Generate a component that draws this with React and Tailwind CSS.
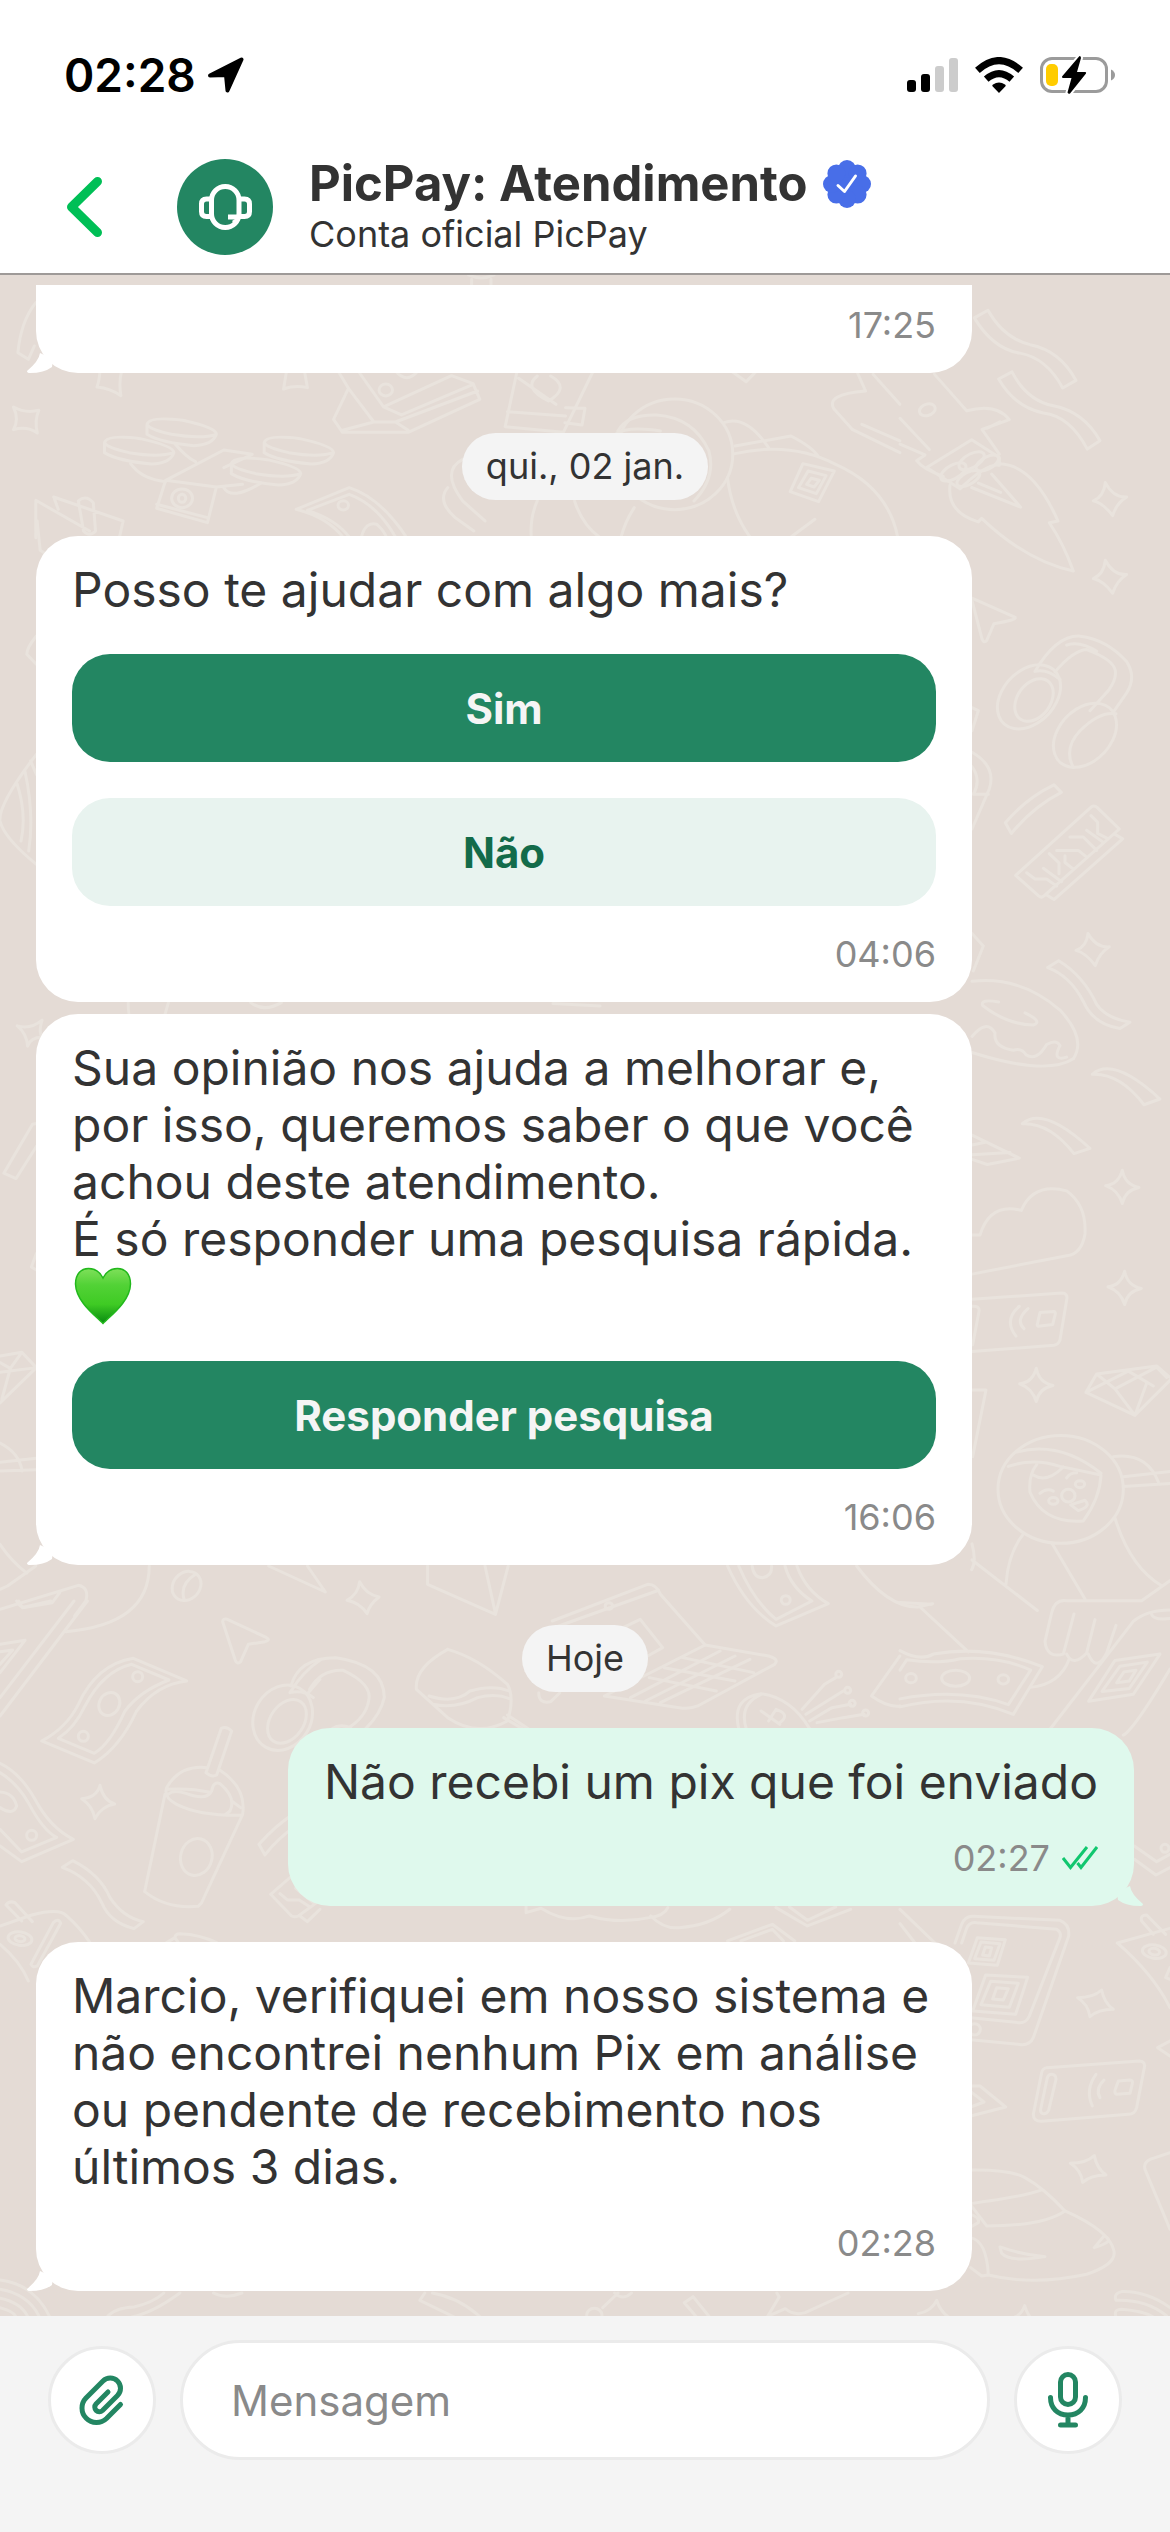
import { useState } from 'react';

const messages = [
    { id: 1, type: 'bubble', time: '17:25', tail: true, cut: true },
    { id: 2, type: 'date', text: 'qui., 02 jan.' },
    {
        id: 3,
        type: 'bubble',
        text: 'Posso te ajudar com algo mais?',
        actions: [{ label: 'Sim', primary: true }, { label: 'Não' }],
        time: '04:06',
    },
    {
        id: 4,
        type: 'bubble',
        joined: true,
        text: 'Sua opinião nos ajuda a melhorar e, por isso, queremos saber o que você achou deste atendimento.\nÉ só responder uma pesquisa rápida.',
        heart: true,
        actions: [{ label: 'Responder pesquisa', primary: true }],
        time: '16:06',
        tail: true,
    },
    { id: 5, type: 'date', text: 'Hoje' },
    { id: 6, type: 'bubble', mine: true, text: 'Não recebi um pix que foi enviado', time: '02:27', tail: true },
    {
        id: 7,
        type: 'bubble',
        text: 'Marcio, verifiquei em nosso sistema e não encontrei nenhum Pix em análise ou pendente de recebimento nos últimos 3 dias.',
        time: '02:28',
        tail: true,
    },
];

// Wallpaper line art, grouped by area. Ovals are [cx, cy, rx, ry, rotation].
const doodles = [
    {
        transform: 'translate(0 270) scale(.7462 .3333)',
        lines: [
            'M48 95Q28 150 24 245L38 265L46 225M628 12Q645 30 662 12M632 25V45M658 25V45',
            'M18 408Q34 428 52 418Q46 448 50 486Q36 464 18 476Q26 446 18 408Z',
            'M134 300Q133 330 130 348Q148 352 162 374Q159 335 163 300M384 300L380 354Q395 342 412 350L408 300',
            'M453 300L467 352L447 445L459 484H547L643 385L634 338L605 314L514 408L480 300M467 352L501 453L459 478M501 453H530L547 478M514 408L538 432L634 340M530 453L640 360M530 300Q545 340 560 300',
            'M693 300L677 467L755 484L795 300M680 422L758 435M758 410L784 412L780 462L757 455M695 322L745 400M720 315Q700 350 735 390Q765 350 738 315',
            'M175 578Q190 625 222 632M235 520Q250 560 262 572M222 628L300 537L338 550L300 590M222 628L290 648L278 755L210 712ZM210 700L278 740M290 648L325 640M300 650Q310 690 350 636',
            'M48 800V688L120 780M72 678L165 750L160 800M72 678L78 715M105 690Q115 670 125 695L128 780Q120 800 112 780Z',
            'M397 715L468 650Q510 680 545 800M397 715Q440 740 460 800M412 718L468 670Q505 700 530 798M412 718Q450 745 468 798M484 800Q490 750 505 760Q515 780 518 800',
            'M828 480Q840 430 880 432Q930 440 950 540Q960 620 930 690M825 490Q840 465 885 480M970 455Q1000 430 1030 530M985 525L1060 495Q1090 530 1097 558M985 548Q1060 510 1120 580Q1190 650 1203 798M975 620Q980 720 1005 798',
            'M1076 578L1118 600L1097 692L1059 662ZM1083 600L1107 614L1094 668L1070 650ZM1087 622L1098 628L1091 648L1081 640ZM1092 745L1060 798M712 800Q710 740 720 690M832 800Q838 750 850 710M770 690Q780 760 803 798M620 565Q590 600 620 690L650 750M600 650Q585 690 610 740L635 780',
            'M980 300L1000 332L1014 300',
            'M197 460Q200 435 245 448Q290 470 290 490Q270 505 230 490Q200 475 197 460V490Q215 515 260 524Q285 522 290 490',
            'M140 515Q143 490 188 503Q233 525 233 545Q213 560 173 545Q143 530 140 515V545Q158 570 203 579Q228 577 233 545',
            'M354 515Q357 490 402 503Q447 525 447 545Q427 560 387 545Q357 530 354 515V545Q372 570 417 579Q442 577 447 545',
            'M310 578Q313 553 358 566Q403 588 403 608Q383 623 343 608Q313 593 310 578V608Q328 633 373 642Q398 640 403 608',
            'M1148 300L1160 360Q1105 370 1118 415L1142 475L1206 545M1155 460L1206 510M1170 310L1206 400',
        ],
        ovals: [[517, 357, 9, 18], [244, 682, 14, 28], [244, 682, 5, 12], [460, 703, 7, 14], [904, 550, 78, 166]],
    },
    {
        transform: 'translate(900 270) scale(.3333 .4464)',
        lines: [
            'M223 105L264 88Q310 150 390 165Q480 178 528 245L488 262Q440 195 360 184Q280 175 223 105Z',
            'M296 242L336 226Q380 290 460 302Q550 315 600 380L562 399Q510 325 430 318Q345 305 296 242Z',
            'M103 231L200 313Q290 295 328 333L246 355L298 410M300 338L262 352M215 378L298 418L298 435Q260 430 180 488L80 440ZM0 330L88 400M0 388L75 412L50 425Q70 445 130 460',
            'M300 432Q400 435 474 560L448 564Q490 610 520 672Q380 650 245 554L235 562Q140 540 150 480M275 455L362 529L215 485M235 475L302 496',
            'M616 474Q640 508 680 506Q650 520 638 548Q610 520 580 515Q612 505 616 474Z',
            'M616 648Q640 682 680 680Q650 694 638 722Q610 694 580 689Q612 679 616 648Z',
            'M564 1484Q588 1516 628 1514Q598 1528 586 1556Q558 1528 528 1522Q560 1514 564 1484Z',
            'M216 733L346 776Q350 782 282 790L260 828Q252 835 246 824L216 738',
            'M520 1112Q490 1070 540 1030Q600 985 648 992M405 897Q470 815 540 818Q620 825 680 875Q710 910 680 945L640 988M465 898Q520 850 560 848Q640 870 646 895Q650 915 625 940L570 985M405 897Q440 890 480 915M500 838Q540 828 590 852',
            'M316 1236Q380 1180 462 1151L484 1168Q400 1200 334 1260Z',
            'M347 1354L575 1200Q583 1196 592 1202L658 1250L432 1400Q424 1405 416 1400ZM645 1262L668 1272L462 1408L440 1398M380 1348L405 1362H440L470 1378M430 1338L485 1368M448 1305L477 1326V1350M470 1298H535L562 1314M510 1268H550L590 1298M560 1253L610 1280M573 1220L593 1235V1260L625 1272M495 1310V1325L520 1340',
            'M216 978L235 985L216 1030M216 1078Q290 1110 268 1160L216 1250M216 1110Q245 1140 220 1172H265M216 1484L250 1512L220 1568',
        ],
        ovals: [
            [82, 311, 24, 13, -10], [160, 450, 40, 16, -20], [215, 425, 40, 16, -20], [205, 465, 36, 14, -20], [262, 430, 36, 14, -20],
            [387, 954, 100, 64, -25], [402, 961, 62, 42, -30], [555, 1040, 100, 64, -25],
        ],
    },
    {
        transform: 'translate(900 900) scale(.3333 .574)',
        lines: [
            'M667 469Q675 494 717 499Q675 504 667 527Q655 504 617 496Q655 494 667 469Z',
            'M674 645Q682 670 724 675Q682 680 674 703Q662 680 624 672Q662 670 674 645Z',
            'M409 814Q417 839 459 844Q417 849 409 872Q397 849 359 841Q397 839 409 814Z',
            'M443 116L476 104Q550 130 590 180Q620 205 690 211L660 222Q580 215 550 175Q510 130 443 116Z',
            'M216 140Q360 130 480 190Q560 240 520 275Q440 305 216 264M216 236Q260 205 285 230Q280 255 340 260Q365 255 378 268Q410 280 440 250Q470 240 480 252Q455 280 500 272M296 176Q240 170 248 182Q320 215 400 216Q430 210 375 195',
            'M577 302Q640 270 780 345L732 355Q660 300 577 302ZM367 388Q430 356 570 431L522 440Q450 386 367 388Z',
            'M216 408L358 448L262 459L216 450M216 442L330 438M216 425L260 420',
            'M216 582H240Q270 525 364 539Q400 490 500 505Q560 530 555 580Q545 615 500 618L216 650',
            'M216 694L485 683Q505 683 500 695L480 765Q475 773 462 774L216 785M216 706Q240 705 237 715L218 773M420 717L462 715Q468 716 465 722L458 738L415 741Q410 740 413 735ZM358 706Q310 730 348 758M384 710Q345 730 372 745',
            'M216 852H258L218 968M558 856L590 824L770 810L810 830M558 856L705 896L810 835M558 856L685 819L760 845M590 824L645 850L705 896L740 840M645 850L770 812L800 830',
            'M325 985Q400 970 480 985L603 1000Q600 1040 550 1080Q430 1085 390 1030Q385 1000 410 982M350 960Q480 940 603 997M420 1032Q440 1022 460 1028M500 1005Q510 996 530 996M512 1052L555 1044Q575 1055 535 1062ZM400 1000Q440 1015 490 986',
            'M370 1103Q325 1135 318 1190M455 1118L555 1216M645 1075Q690 1160 785 1193M216 1148L412 1236M216 1120Q230 1150 215 1165M640 968Q740 960 775 1012M670 1003L810 994M670 1020L810 1015',
            'M810 1184L725 1219H500Q465 1216 455 1240L435 1290Q440 1320 490 1312L522 1242M500 1312Q520 1335 560 1310L585 1252M565 1312Q590 1345 620 1310L648 1262M508 1320Q480 1365 390 1370',
            'M450 1443L700 1255Q740 1235 810 1235M670 1453Q700 1445 810 1338M755 1243Q760 1253 810 1250M566 1394L645 1323L780 1312L700 1382ZM606 1377L660 1333L742 1326L688 1372ZM650 1362L672 1343L708 1340L688 1359Z',
            'M0 1306Q60 1325 100 1312Q260 1295 427 1334L340 1417Q180 1378 0 1404M0 1340L20 1322Q110 1330 180 1320Q300 1315 392 1340L325 1400Q180 1370 0 1390M60 1230L205 1308M0 1222L95 1225',
        ],
        ovals: [[482, 1025, 188, 94], [460, 1045, 14, 6], [540, 1016, 14, 6], [505, 1036, 20, 11], [167, 1354, 42, 14], [33, 1354, 16, 8], [310, 1356, 16, 8]],
    },
    {
        transform: 'translate(0 1540) scale(.7462 .3333)',
        lines: [
            'M200 75Q200 250 88 272M262 100Q240 130 247 178M0 145L10 135L48 75M0 205L105 133Q120 140 115 180L100 225M25 180L30 200L70 185L80 155',
            'M360 75L436 153L412 75M482 122Q490 160 508 168Q495 190 492 218Q482 185 465 178Q480 160 482 122ZM573 75V130L664 220L681 75M650 75L664 218',
            'M390 435Q400 350 450 350Q515 370 515 470Q510 520 490 563M415 445Q430 385 460 388Q500 430 494 480Q490 530 465 563M445 563Q455 548 470 560',
            'M600 325Q555 380 558 445L600 530Q640 590 680 540Q690 470 680 430Q640 350 600 325M575 465Q610 490 630 450Q660 430 682 450M580 490Q610 505 640 470Q665 455 685 475M675 530L700 563M680 522L708 563',
            'M740 240L868 130Q880 130 885 160L945 312L810 465M745 258L880 150M945 312L1030 345Q1045 355 1038 370L935 495Q925 505 910 500L810 465M965 330L845 470M985 345L865 480M1005 355L885 485M915 350L1010 395M890 380L985 420M870 410L960 450M835 260L858 235L888 320L868 345M722 455Q722 490 738 482L750 456',
            'M975 75Q1000 200 1040 255L1110 188Q1080 150 1068 75M990 75Q1010 180 1040 235L1088 180Q1060 140 1052 75M1008 75Q1010 110 1022 110Q1035 105 1034 75M1148 75Q1190 200 1230 198L1250 188',
            'M990 563Q980 470 1020 458Q1060 470 1085 563M1000 563Q990 490 1020 460M1020 510L1045 550M1030 540L1040 505Q1060 520 1045 545M1075 505L1105 430L1120 410M1080 520L1130 450M1085 540L1115 500L1140 490M1095 545L1130 530L1158 520',
            'M1206 345L1168 465Q1190 500 1206 495',
            'M705 1090V1115L725 1102Q760 1150 790 1125Q830 1150 870 1130Q890 1125 895 1100M872 1125Q890 1165 910 1160Q950 1155 978 1105M1040 1100L1082 1155L1140 1105M1058 1098L1082 1138L1120 1098M975 1200L1035 1150L1065 1200M993 1200L1035 1165L1050 1200',
        ],
        ovals: [[250, 135, 19, 44, 5], [816, 195, 5, 10], [1053, 177, 6, 13], [1124, 400, 4, 9], [1136, 448, 4, 9], [1142, 487, 4, 9], [1160, 516, 4, 9]],
    },
    {
        transform: 'translate(0 1600) scale(.3333)',
        lines: [
            'M50 0Q60 20 75 18L152 0M222 0L0 290M262 0L0 345M0 130L75 118L0 215M0 152L38 147L0 190',
            'M668 62Q668 52 682 55L800 110Q812 118 795 122L745 130L722 182Q712 192 706 178Z',
            'M125 420Q200 380 235 310Q290 190 400 172L560 240Q470 250 410 330Q360 440 283 486ZM175 412Q225 380 255 315Q310 210 395 190L507 237Q420 270 375 330Q330 430 283 457Z',
            'M0 487Q60 515 105 595Q150 680 220 715L65 782L0 735M0 515Q50 545 85 605Q130 690 170 709L65 753L0 685M0 573Q40 575 50 615Q40 645 0 620',
            'M300 553Q310 598 344 609Q305 615 285 653Q278 615 245 593Q290 590 300 553Z',
            'M495 580L434 872Q500 925 595 916L605 905L728 640Q740 560 660 508M622 500Q540 490 500 560Q490 590 530 610Q600 645 725 643M500 565Q570 560 630 574M505 580Q520 565 560 578Q620 600 635 570Q640 540 660 548Q710 590 690 630L675 642M695 600L722 620M664 382L618 515Q635 530 650 522L695 390Q680 375 664 382Z',
            'M870 275Q910 210 960 178M925 275L960 235M870 275Q910 265 940 290M887 635Q830 670 777 730L795 762Q830 715 887 675M887 815L812 880L875 945Q885 950 895 945L950 905M900 945L922 962L960 925M840 878L862 897H898L930 918M887 862L940 905',
            'M187 799L218 779Q300 820 330 890Q370 950 430 962L402 983Q330 965 305 905Q270 830 187 799Z',
            'M0 975L95 942Q180 920 200 945Q240 980 270 1025M0 1030Q60 1080 85 1140M18 912Q28 898 45 905L97 962M18 912L65 960M160 965Q175 950 182 967L112 1095Q98 1102 93 1090ZM500 1025L525 1010Q525 998 540 998Q600 1000 650 1025M525 1010L535 1025',
        ],
        ovals: [[413, 227, 15, 15], [250, 406, 15, 15], [328, 309, 30, 36, 30], [95, 703, 15, 15], [589, 768, 47, 56, 15], [848, 350, 85, 102, 30], [861, 361, 50, 72, 35], [60, 1013, 36, 20, 8], [60, 1013, 15, 9, 8]],
    },
    {
        transform: 'translate(900 1840) scale(.3333)',
        lines: [
            'M165 306L185 250Q195 225 220 226L480 238Q510 250 506 285L400 590Q390 612 365 611L212 596M185 306L200 262Q208 242 230 245L470 265Q485 275 480 290L388 525Q378 548 355 545L212 530',
            'M232 290L316 296L292 373L205 366ZM243 303L300 308L282 358L224 353ZM256 318L275 320L268 345L248 342ZM257 402L383 409L347 520L218 510ZM272 421L355 427L328 499L243 491ZM290 440L325 443L310 477L278 474Z',
            'M605 447Q612 485 640 505Q595 505 570 527Q565 490 533 470Q580 470 605 447Z',
            'M583 944Q590 982 618 1002Q573 1002 548 1024Q543 987 511 967Q558 967 583 944Z',
            'M55 1418Q95 1410 110 1378Q120 1410 145 1428M345 1428Q365 1420 374 1394Q380 1415 390 1428',
            'M440 680L718 660Q738 662 733 680L710 800Q705 820 685 820L425 841Q400 842 400 820L425 695Q428 682 440 680M455 700Q468 700 468 715L446 808Q440 820 428 818Q420 815 422 805L442 710Q446 700 455 700M655 720L690 717Q700 718 697 728L690 757L650 760Q643 758 645 748ZM588 700Q555 745 577 795M612 717Q585 745 600 770',
            'M652 306L810 262M652 306Q760 400 810 500M725 240Q720 222 740 222L797 280M725 240L760 280M810 380L797 410L810 415M212 735L240 735L317 798L212 825M212 752L252 783L212 798M810 600L773 620L810 645',
            'M212 987Q330 985 375 1010Q430 1040 495 1110Q630 1170 642 1230Q650 1270 560 1300Q400 1335 265 1302M212 1088Q380 1065 425 1047M495 1110Q430 1155 260 1155L212 1092M300 1218Q360 1240 435 1247Q330 1265 305 1237ZM583 1220L612 1185Q650 1200 583 1220M212 1190Q260 1200 265 1302L245 1305L212 1280M212 1120Q240 1130 235 1145L212 1158',
            'M810 935L750 955Q730 965 735 985L810 1165M810 1400Q740 1350 665 1352Q640 1358 648 1378Q740 1375 800 1425M648 1428Q640 1405 665 1405Q730 1410 760 1428M703 15L770 62L810 40M703 55L768 102L810 80M0 205L105 306M0 248L45 306',
        ],
        ovals: [[224, 565, 17, 17], [763, 332, 36, 20, 8], [763, 332, 16, 10, 8], [795, 22, 12, 12]],
    },
    {
        transform: 'translate(0 520) scale(.3827 .3333)',
        lines: [
            'M95 345Q70 380 70 400L95 430M95 700Q-5 850 0 900Q10 950 95 1030M45 790Q70 880 55 960M65 750Q90 880 75 990M80 720L95 760M335 1445Q335 1482 340 1485M440 1445L430 1485M655 1445Q690 1475 735 1445M1445 1448L1568 1455M97 0L105 88L115 95',
        ],
        ovals: [],
    },
    {
        transform: 'translate(0 1000) scale(.3827)',
        lines: [
            'M45 65Q80 75 110 50Q100 80 110 95Q80 95 72 118Q70 85 45 65M95 320L85 322L10 450L42 464L95 380M95 660L82 695L95 703M0 928L57 918L95 958L0 1050M0 970L95 958M57 918L27 960L0 945M27 960L5 1040M0 1155Q50 1180 58 1228M0 1205L95 1195M0 1228L95 1225M0 1420Q30 1465 70 1495',
        ],
        ovals: [],
    },
    {
        transform: 'translate(0 2240) scale(.3827 .3333)',
        lines: [
            'M0 117Q90 130 130 228M0 145Q75 160 103 228M0 172Q55 185 73 228M0 200Q35 210 42 228M280 228Q300 200 350 198Q400 185 428 156M345 228Q400 215 470 156M558 156Q590 175 632 156M1110 156L1097 178L1187 228M1130 156Q1200 170 1255 228',
            'M1575 200L1615 156M1606 156Q1628 180 1650 156M1788 185L1811 167L1854 228M1788 185L1820 228M2030 156L2036 168L2006 226L2052 203Q2074 225 2104 215L2216 156',
        ],
        ovals: [[1553, 222, 20, 20]],
    },
];

function Wallpaper() {
    return (
        <svg className="absolute inset-0 h-full w-full" viewBox="0 274 1170 2042" preserveAspectRatio="xMidYMin slice" fill="none" stroke="#e9e3dd" strokeWidth="3" strokeLinecap="round" strokeLinejoin="round" aria-hidden="true">
            {doodles.map((group) => (
                <g key={group.transform} transform={group.transform}>
                    {group.lines.map((d) => <path key={d} d={d} vectorEffect="non-scaling-stroke" />)}
                    {group.ovals.map(([cx, cy, rx, ry, angle = 0]) => (
                        <ellipse key={`${cx}-${cy}-${rx}`} cx={cx} cy={cy} rx={rx} ry={ry} transform={`rotate(${angle} ${cx} ${cy})`} vectorEffect="non-scaling-stroke" />
                    ))}
                </g>
            ))}
        </svg>
    );
}

function StatusBar() {
    return (
        <div className="flex items-center justify-between pt-[45px] pb-9 pr-[54px] pl-16 text-black">
            <div className="flex items-center gap-3">
                <span className="text-[46px] leading-[60px] font-semibold">02:28</span>
                <svg className="h-9 w-9" viewBox="0 0 36 36" fill="currentColor" stroke="currentColor" strokeWidth="4" strokeLinejoin="round" aria-hidden="true">
                    <path d="M2 18.5 33.5 2.5 19.5 33.5 18 18Z" />
                </svg>
            </div>
            <div className="flex items-center gap-[17px]">
                <svg className="h-[34px] w-[51px]" viewBox="0 0 51 34" aria-hidden="true">
                    <rect x="0" y="22" width="9" height="12" rx="3" />
                    <rect x="14" y="16" width="9" height="18" rx="3" />
                    <rect x="28" y="8" width="9" height="26" rx="3" fill="#ccc" />
                    <rect x="42" y="0" width="9" height="34" rx="3" fill="#ccc" />
                </svg>
                <svg className="h-9 w-12" viewBox="0 0 48 36" aria-hidden="true">
                    <path d="M24 36 17.5 29.2Q16.8 28.3 18 27.5Q24 23.5 30 27.5Q31.2 28.3 30.5 29.2Z" />
                    <path d="M11.2 22.2Q24 11 36.8 22.2" fill="none" stroke="currentColor" strokeWidth="7" />
                    <path d="M2.4 13.4Q24-6.2 45.6 13.4" fill="none" stroke="currentColor" strokeWidth="7" />
                </svg>
                <svg className="h-[38px] w-[76px]" viewBox="0 0 76 38" aria-hidden="true">
                    <rect x="1.5" y="2.5" width="65" height="33" rx="10.5" fill="none" stroke="#9b9b9b" strokeWidth="3" />
                    <path d="M71 13.5Q75 15.5 75 19Q75 22.5 71 24.5Z" fill="#9b9b9b" />
                    <rect x="6" y="8" width="12" height="22" rx="5" fill="#ffcc00" />
                    <path d="M39.5 0 22 20.5Q22 22 23 22H31.5L27.5 36.5Q28.5 38.5 30 37.5L46 17.5Q46.5 16 45 16H37L41 2Q41 0 39.5 0Z" stroke="#fff" strokeWidth="4" paintOrder="stroke" />
                </svg>
            </div>
        </div>
    );
}

function VerifiedBadge() {
    return (
        <svg className="h-12 w-12 shrink-0" viewBox="0 0 48 48" role="img" aria-label="Conta verificada">
            <g fill="#486ee8">
                <circle cx="24" cy="24" r="20" />
                {[0, 45, 90, 135, 180, 225, 270, 315].map((angle) => (
                    <circle key={angle} cx="24" cy="9" r="9" transform={`rotate(${angle} 24 24)`} />
                ))}
            </g>
            <path d="M15 25.5 21.5 31.5 32.5 16" fill="none" stroke="#fff" strokeWidth="3" strokeLinecap="round" strokeLinejoin="round" />
        </svg>
    );
}

function Header() {
    return (
        <header className="border-b-2 border-[#9e9a98] bg-white">
            <StatusBar />
            <div className="flex h-[132px] items-center pl-[66px]">
                <button type="button" aria-label="Voltar" className="mr-[75px]">
                    <svg className="h-[60px] w-9" viewBox="0 0 36 60" fill="none" stroke="#00bf56" strokeWidth="9" strokeLinecap="round" strokeLinejoin="round">
                        <path d="M31.5 4.5 5.5 30 31.5 55.5" />
                    </svg>
                </button>
                <svg className="mr-9 h-24 w-24 shrink-0 rounded-full bg-[#238662]" viewBox="0 0 96 96" fill="none" stroke="#fff" strokeWidth="5" strokeLinejoin="round" aria-hidden="true">
                    <rect x="34.5" y="27.5" width="27.5" height="41" rx="13.7" />
                    <path d="M34 40H29.5Q24.5 40 24.5 45V52.5Q24.5 57.5 29.5 57.5H34M62.5 40H67.5Q72.5 40 72.5 45V52.5Q72.5 57.5 67.5 57.5H62.5" />
                    <path d="M51 58H61" />
                    <path d="M55 62 61 58 58 66Z" fill="#fff" stroke="none" />
                </svg>
                <div className="pt-1">
                    <div className="flex items-center gap-[15px]">
                        <h1 className="text-[49px] leading-[51px] font-bold text-[#333]">PicPay: Atendimento</h1>
                        <VerifiedBadge />
                    </div>
                    <p className="text-[36px] leading-[51px] text-[#333]">Conta oficial PicPay</p>
                </div>
            </div>
        </header>
    );
}

function GreenHeart() {
    return (
        <span className="flex h-[58px] items-center">
            <svg className="h-[60px] w-[60px]" viewBox="0 0 60 60" role="img" aria-label="💚">
                <defs>
                    <linearGradient id="heartFill" x1="0" y1="0" x2="0" y2="1">
                        <stop offset="0" stopColor="#7fe05a" />
                        <stop offset=".3" stopColor="#52d236" />
                        <stop offset=".65" stopColor="#3fcb24" />
                        <stop offset="1" stopColor="#078a10" />
                    </linearGradient>
                </defs>
                <path d="M31 57.5C24 50 4 36 3.5 18C3.5 8 9 2.5 16.5 2.5C23 2.5 28 6 31 12C34 6 39 2.5 45.5 2.5C53 2.5 58.5 8 58.5 18C58 36 38 50 31 57.5Z" fill="url(#heartFill)" stroke="#22b81c" strokeWidth="1.5" />
            </svg>
        </span>
    );
}

function Tail({ mine }) {
    return (
        <svg className={`absolute bottom-0 h-5 w-[26px] ${mine ? '-right-[9px] -scale-x-100 text-[#dff9ed]' : '-left-[9px] text-white'}`} viewBox="0 0 26 20" fill="currentColor" aria-hidden="true">
            <path d="M13 0Q12 8 0 18Q0 20 3 20Q17 20 25 14L26 6Z" />
        </svg>
    );
}

function Bubble({ message }) {
    const { text, heart, actions, time, mine, tail, cut, joined } = message;
    return (
        <article className={`relative mx-9 px-9 pb-[27px] ${mine ? 'w-fit max-w-4/5 self-end bg-[#dff9ed]' : 'w-4/5 self-start bg-white'} ${cut ? 'rounded-b-[42px] pt-[19px]' : 'rounded-[42px] pt-[25px]'} ${joined ? 'mt-3' : ''} ${cut || joined ? '' : 'mt-9'}`}>
            {text && <p className="text-[48px] leading-[57px] whitespace-pre-line text-[#333]">{text}</p>}
            {heart && <GreenHeart />}
            {actions && (
                <div className="mt-9 flex flex-col gap-9">
                    {actions.map(({ label, primary }) => (
                        <button key={label} type="button" className={`h-[108px] rounded-[38px] text-[42px] font-bold ${primary ? 'bg-[#238662] text-[#f5f5f5]' : 'bg-[#e8f3ef] text-[#136b4a]'}`}>
                            {label}
                        </button>
                    ))}
                </div>
            )}
            <div className={`flex items-center justify-end gap-3 ${cut ? '' : 'mt-[27px]'}`}>
                <time className="text-[36px] leading-[42px] text-[#8a8a8a]">{time}</time>
                {mine && (
                    <svg className="h-6 w-9" viewBox="0 0 36 24" fill="none" stroke="#11c76f" strokeWidth="3" role="img" aria-label="Lida">
                        <path d="M1 12 8.5 21.5 25 1M15.5 17 19 21.5 35 1" />
                    </svg>
                )}
            </div>
            {tail && <Tail mine={mine} />}
        </article>
    );
}

function Composer() {
    const [draft, setDraft] = useState('');
    const roundButton = 'flex h-[108px] w-[108px] shrink-0 items-center justify-center rounded-full border-[3px] border-[#ebebeb] bg-white text-[#238662]';
    return (
        <form className="flex items-center gap-6 bg-[#f4f4f4] px-12 pt-6 pb-[72px]" onSubmit={(e) => e.preventDefault()}>
            <button type="button" aria-label="Anexar arquivo" className={roundButton}>
                <svg className="h-[52px] w-12" viewBox="0 0 48 52" fill="none" stroke="currentColor" strokeWidth="5" strokeLinecap="round" strokeLinejoin="round">
                    <path d="M30 18 18 30A4.6 4.6 0 0 0 24.5 36.5L39.500 21.500A10.25 10.25 0 0 0 25 7L8 24A14.5 14.5 0 0 0 28.5 44.5L42.5 30.5" />
                </svg>
            </button>
            <input
                type="text"
                aria-label="Mensagem"
                placeholder="Mensagem"
                value={draft}
                onChange={(e) => setDraft(e.target.value)}
                className="h-[120px] min-w-0 flex-1 rounded-full border-[3px] border-[#ebebeb] bg-white px-12 text-[42px] text-[#333] placeholder:text-[#8a8a8a]"
            />
            <button type="button" aria-label="Gravar áudio" className={roundButton}>
                <svg className="h-14 w-10" viewBox="0 0 40 56" fill="none" stroke="currentColor" strokeWidth="5" strokeLinecap="round">
                    <rect x="12.5" y="2.5" width="15" height="30" rx="7.5" />
                    <path d="M2.5 25.5C2.5 36 9.5 43 20 43S37.5 36 37.5 25.5M20 43V53M12.5 53H27.5" />
                </svg>
            </button>
        </form>
    );
}

export default function App() {
    return (
        <div className="flex min-h-screen flex-col bg-[#f4f4f4] font-['Inter',sans-serif]">
            <Header />
            <main className="relative flex-1 overflow-hidden bg-[#e4dbd5]">
                <Wallpaper />
                <div className="relative flex flex-col pt-[10px] pb-6">
                    {messages.map((message) => (
                        message.type === 'date' ? (
                            <div key={message.id} className="mt-[60px] self-center rounded-full bg-[#f4f4f4] px-6 text-[36px] leading-[67px] text-[#333]">
                                {message.text}
                            </div>
                        ) : <Bubble key={message.id} message={message} />
                    ))}
                </div>
            </main>
            <Composer />
        </div>
    );
}
